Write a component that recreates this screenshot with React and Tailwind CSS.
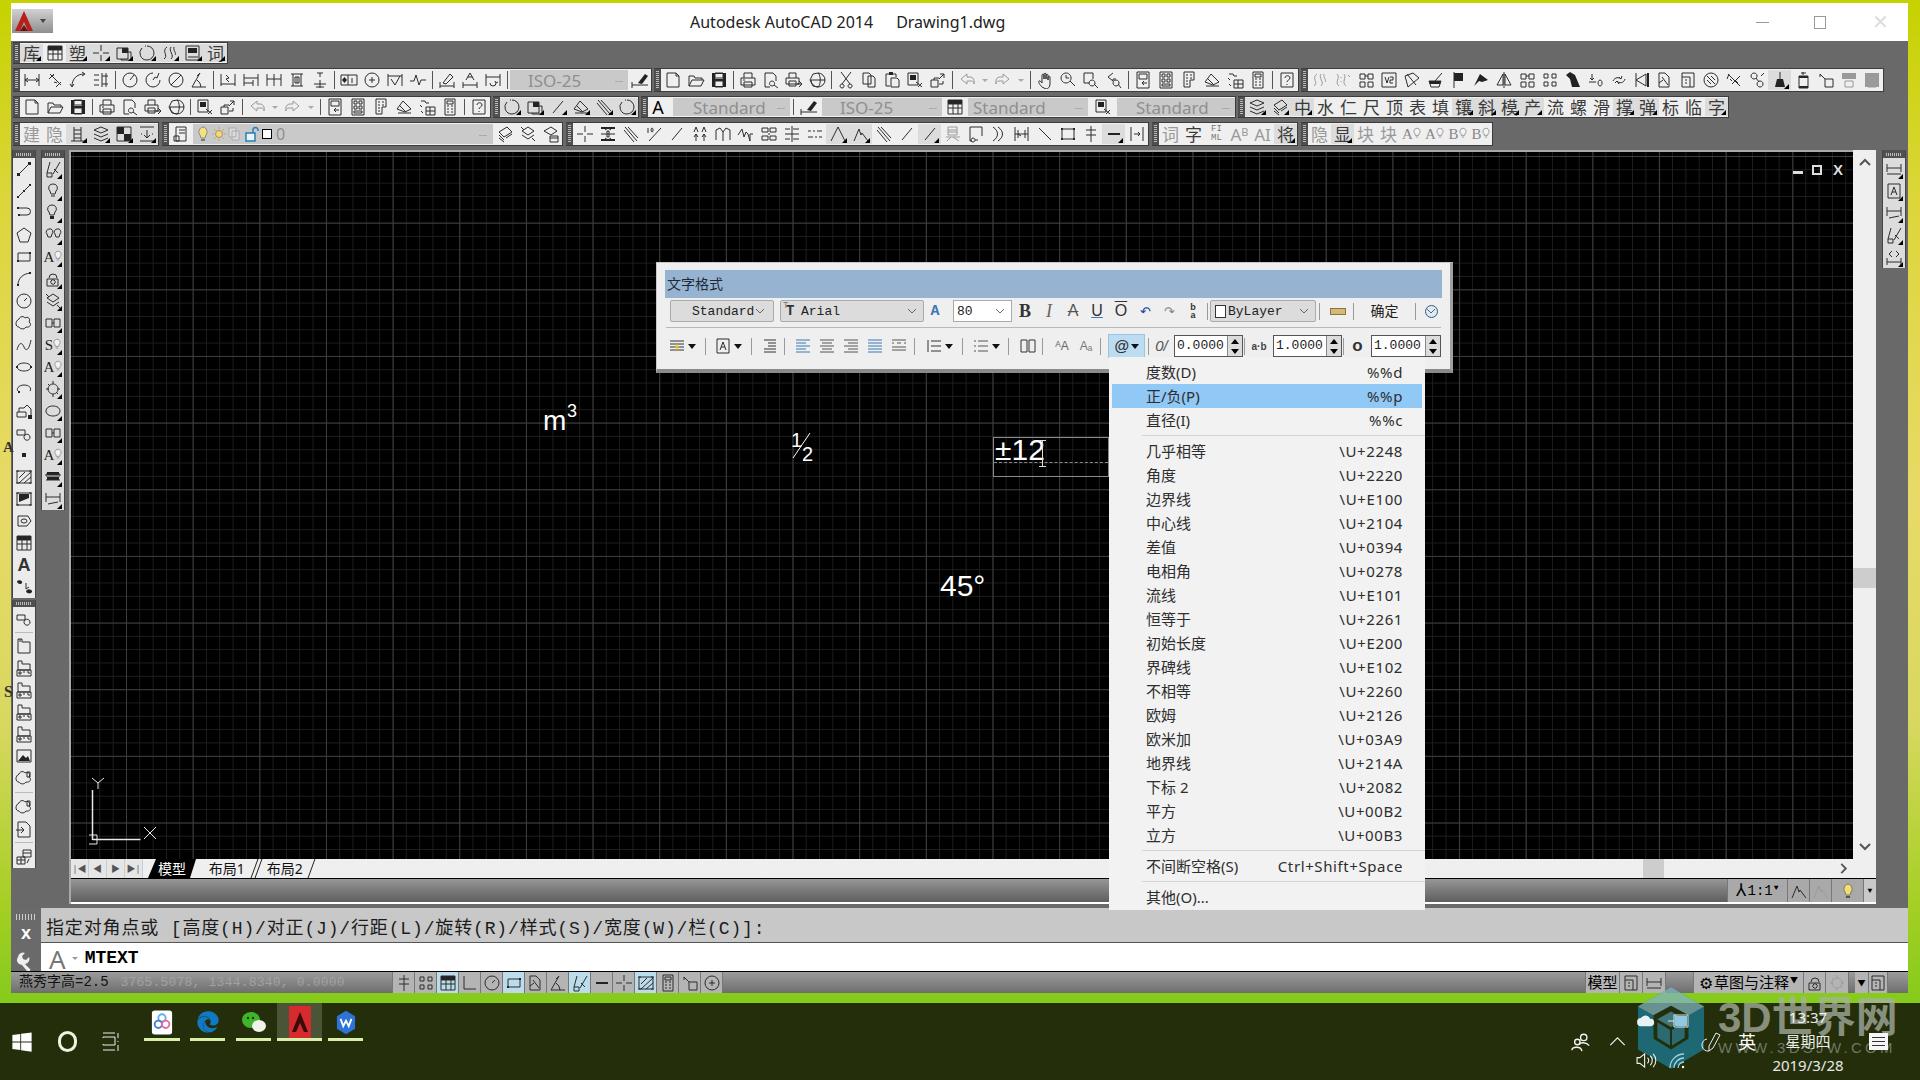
import { FaWindows, FaEdge } from "react-icons/fa"

const CJK = "font-['Noto_Sans','Noto_Sans_CJK_SC',sans-serif]"
const MONO = "font-['Liberation_Mono','Noto_Sans_CJK_SC',monospace]"
const ARIAL = "font-['Liberation_Sans',sans-serif]"

// stroke path, or [stroke path, fill path]
const P = {
  dimLinear: "M2 3v12M16 3v12M2 9h14M2 9l3-2M2 9l3 2M16 9l-3-2M16 9l-3 2",
  dimAligned: "M4 3l11 11M3 8l5-5M10 16l5-5M8 4l-3 1M8 11l3 1",
  dimArc: "M3 15C3 8 8 3 15 3M13 1l3 2-3 2M1 13l2 3 2-3",
  ordinate: "M2 4h5M2 9h5M2 14h5M10 2v14M14 2v14M10 5h6M10 13h6",
  radius: "M16 9a7 7 0 1 1-14 0a7 7 0 1 1 14 0M9 9l4-5",
  jog: "M16 9a7 7 0 1 1-7-7M9 9l2-3 2 1 2-5",
  diameter: "M16 9a7 7 0 1 1-14 0a7 7 0 1 1 14 0M4 14L14 4",
  angular: "M2 16h14M2 16L10 2M11 16a9 9 0 0 0-4-7M7 5l3-3",
  quick: "M2 3v12M16 3v12M2 13h14M7 4l3 3-3 1 3 3",
  baseline: "M2 3v12M16 3v12M2 7h14M2 12h9M11 9v6",
  cont: "M2 3v12M9 3v12M16 3v12M2 8h14",
  space: "M3 3h12M3 15h12M5 3v12M13 3v12M7 6h4v6H7zM9 6v6",
  brk: "M3 13h12M9 2v4M9 9v8M6 2h6M5 16h8",
  tol: ["M1 4h16v10H1zM8 4v10M12 7v5", "M4.5 6l2.5 3-2.5 3-2.5-3z"],
  center: "M16 9a7 7 0 1 1-14 0a7 7 0 1 1 14 0M9 6v6M6 9h6",
  inspect: "M2 3v12M16 3v12M2 5h14M5 8l4 6 5-9",
  jogl: "M1 10h4l2-6 3 10 2-5h5",
  dimEdit: "M2 15h14M2 11v6M16 11v6M5 12l7-9 3 3-7 7z",
  textEdit: "M5 9l4-7 4 7M6.5 6h5M2 11v6M16 11v6M2 14h14",
  update: "M2 3v12M16 3v12M2 6h14M6 12a3 3 0 0 0 6 0M11 10l1 2 2-1",
  brush: ["M1 11v6M1 14h16", "M7 12l7-9 3 2-6 8z"],
  newf: "M3 2h9l3 3v11H3zM12 2v3h3",
  open: "M2 15V5h5l1 2h7v2M2 15l3-6h12l-3 6z",
  save: ["M5 10h8v6H5zM5 2h8v5H5z", "M2 2h14v14H2zM5 3v5h8V3zM5 10v5h8v-5z"],
  print: "M5 7V2h8v5M2 7h14v7H2zM5 11h8v5H5zM4 9h2",
  preview: "M3 2h8l3 3v5M3 2v14h5M10 10a2.5 2.5 0 1 0 .1 0M12 14l4 3",
  publish: "M4 7V2h7v5M1 7h13v6H1zM4 10h7v5H4zM12 13h5M14 10l3 3-3 3",
  globe: "M10 2a7 7 0 1 1-7 7M10 2c3 2 3 12 0 14M3 9h14M5 3L2 9l3 6M10 2L5 3M10 16l-5-1",
  cut: "M4 1l9 12M14 1L5 13M5 13a2 2 0 1 0 .1 0M13 13a2 2 0 1 0 .1 0",
  copy: "M3 2h6l2 2v9H3zM8 5h5l2 2v9H8z",
  paste: ["M3 3v12h4M13 3v3M3 3h10M8 7h6l2 2v7H8z", "M6 1h4v3H6z"],
  match: ["M2 2h10v12H2zM10 11l6 5M12 16l4-4", "M4 4h6v5H4z"],
  block: "M2 9h7v7H2zM5 9V7h5M11 3h4v4M15 3l-5 5M10 13h4v-3",
  undo: "M9 3L3 8l6 5v-3h4c2 0 3 1 3 3 1-4-1-7-4-7H9z",
  redo: "M9 3l6 5-6 5v-3H5c-2 0-3 1-3 3-1-4 1-7 4-7h3z",
  pan: "M6 16c-2-2-4-5-3-6s2 1 3 2V4c0-1 2-1 2 0v4-5c0-1 2-1 2 0v5-4c0-1 2-1 2 0v5-3c0-1 2-1 2 0v7c0 3-2 5-4 5z",
  zoomR: "M7 2a5 5 0 1 0 .1 0M11 10l5 5M7 4v3h3",
  zoomW: ["M2 2h9v6M2 2v10h5M10 9a3 3 0 1 0 .1 0M12 13l4 4"],
  zoomP: "M8 2L3 6l5 4V8h3M11 9a3 3 0 1 0 .1 0M13 13l3 4",
  props: "M3 1h12v16H3zM5 3h8v5H5zM8 12h5M8 12l2-2M8 12l2 2",
  dc: "M3 1h12v16H3zM5 3h3v3H5zM10 3h3v3h-3zM5 8h3v3H5zM10 8h3v3h-3zM5 13h8v2H5z",
  tp: "M4 1h10v8h-4v7H4zM6 4h2M6 7h2M6 10h2M6 13h2M10 4h2M10 7h2",
  sheet: "M2 11l6-8 8 8-6 3zM3 15h13M5 8l6 6",
  markup: "M3 3h4l1 2h3M2 7l2 2M8 9h9v8H8zM8 13h9M12 9v8M3 13l2 2",
  calc: "M4 1h10v16H4zM6 3h6v3H6zM6 8h2M10 8h2M6 11h2M10 11h2M6 14h2M10 14h2",
  help: "M3 2h12v14H3zM7 7c0-3 5-3 5 0 0 2-3 2-3 4M9 13v1",
  tbl: ["M2 2h14v14H2zM2 6h14M2 10h14M7 2v14M12 2v14", "M2 2h14v4H2z"],
  cross: "M9 1v6M9 11v6M1 9h6M11 9h6",
  box3: ["M2 4h11v11H2zM13 8h3v8H6v-1", "M7 4h6v5H7z"],
  dashCirc: "M9 2a7 7 0 0 1 0 14M9 16a7 7 0 0 1-5-12M7 2l1 0",
  arcs: "M3 15c5-3-3-8 3-12M10 3c-3 4 4 8 0 12M13 3c-1 4 3 6 1 8",
  calcBox: ["M2 2h13v14H2zM4 13h10", "M4 4h9v5H4z"],
  fence2: "M3 3c4 4-3 8 2 12M10 3c3 4-3 8 2 12M7 6v1M7 10v1M14 4l2 2",
  boxes: "M3 3h5v5H3zM11 3h5v5h-5zM3 11h5v5H3zM11 11h5v5h-5zM8 5l3 0",
  boxes2: "M3 3h4v4H3zM11 3h4v4h-4zM3 11h4v4H3zM11 11h4v4h-4z",
  v2: "M2 2h14v14H2zM5 6l2 6 2-6M10 6h3v3h-3v3h3",
  kite: "M5 16L2 5l8-3 6 5-11 9M4 3l9 11",
  mortar: ["M3 10h12l-2 6H5zM9 10l7-8", "M3 10h12l-1 3H4z"],
  flag: ["M5 1v16", "M5 2h9v8H5z"],
  peak: ["", "M2 15L8 3l8 6-6 2-3-1z"],
  tri: "M2 14L8 3v11zM10 3l6 11h-6zM9 1v16",
  cat: ["", "M2 4l4-3 5 3 5 12H8L6 8z"],
  zero: "M2 11h7M5 3v6M3 7l2 2 2-2M13 9a2 3 0 1 0 .1 0",
  rot: "M3 10c2-4 6-4 8-2M9 6l2 2 1-3M15 8c-1 4-6 5-8 2M9 13l-2-3-2 2",
  dimEnd: ["M3 2v14M3 9l10-6v12z", "M14 2h2v14h-2z"],
  doc3: "M3 2h6l4 4v10H3zM6 6l6 8M3 12l4-3",
  doc4: "M3 2h12v14H3zM3 6h8v10M6 9h2M6 12h2",
  ball: "M16 9a7 7 0 1 1-14 0a7 7 0 1 1 14 0M5 5l8 8M9 5l4 4M5 9l4 4",
  xarrows: "M3 3l12 12M15 5l-8 8M5 8l2 2M11 10l2 2M2 8l2-5",
  link: "M6 2a3 3 0 1 0 .1 0M12 10a3 3 0 1 0 .1 0M8 7l3 4M13 5l3-3",
  broom: ["M9 1v7", "M6 8h6l2 8H4z"],
  bigbox: ["M5 5h9v12H5zM7 2h5M9 1v3", "M5 5h9v2H5zM5 15h9v2H5z"],
  smallbox: "M3 3l5 5M8 8h8v8H8zM3 3v3",
  disk: ["M5 10h8v6H5z", "M2 2h14v6H2z"],
  disk2: ["M5 10h8v6H5zM5 3h8v4H5z", "M2 2h14v14H2z"],
  ladder: "M5 2v14M12 2v14M5 5h7M5 9h7M5 13h7M2 16h14",
  layers: "M2 5l7-3 7 3-7 3zM2 9l7 3 7-3M2 13l7 3 7-3",
  colors: ["M2 2h14v14H2z", "M2 2h7v7H2zM9 9h7v7H9z"],
  dotted: "M2 2h14M2 16h14M9 5v8M6 10l3 3 3-3M3 9h1M14 9h1",
  layer0: "M4 2h10v14H4zM7 5h6M7 8h6M2 11h5v5H2z",
  lay1: "M3 7l8-5 5 5-8 5zM3 10l5 5M10 13l6-4M3 13l5 4",
  lay2: "M3 6l6-4 6 4-6 4zM3 10l6 4 6-4M2 2l3 3M13 13l3 3",
  lay3: "M2 6l7-4 6 4M2 6l7 4 6-4M8 11h8v6H8zM8 13h8",
  dimBrk: ["M2 9h14M8 6h2v6H8zM6 5l3-2 3 2M6 13l3 2 3-2", "M2 2h14v2H2zM2 14h14v2H2z"],
  slashes: "M3 2l12 14M6 2l10 11M2 5l10 12",
  t10: "M3 3v5M7 3a1 2 0 1 0 .1 0M4 16L16 3",
  slash1: "M4 15L14 3",
  aa: "M3 7l2-5 2 5M11 7l2-5 2 5M5 9v7M13 9v7M3 12l2-3 2 3M11 12l2-3 2 3",
  emm: "M2 15V5l4-2 3 4 3-4 4 2v10M9 7v9",
  wave: "M1 10l4-6 2 8 2-5 2 2 2 7V9h3",
  hook: "M2 3h6v4H2zM10 3h6v4h-6zM2 15h6v-4H2zM10 15h6v-4h-6zM8 9h2",
  tick: "M2 4h5M2 9h14M10 4h6M2 14h5M10 14h6M9 1v16",
  dash2: "M2 6h3M7 6h2M11 6h5M2 12h5M9 12h2M13 12h3",
  peakLine: "M2 16L9 2l7 14",
  peak2: "M2 16l5-12 2 6 1-2 6 8",
  kana: "M4 2h9v8H4zM4 5h9M4 7h9M2 12h14M7 12l-4 4M9 12l6 4",
  hookBox: "M3 2h12v9M3 2v14h2M6 13a2 2 0 1 0 .1 0M8 15h3",
  parens: "M3 2c6 4 6 10 0 14M8 2c6 4 6 10 0 14",
  dimBig: "M2 2v14M15 2v14M5 5v8M12 5v8M2 9h13M5 9l3 2",
  diag: "M3 3l12 12",
  square: ["M3 4h12v10H3z", "M2 3h2v2H2zM14 13h2v2h-2zM14 3h2v2h-2zM2 13h2v2H2z"],
  hatch3: "M9 1v16M4 5h10M4 10h10",
  minusArrows: ["", "M3 8h12v2H3z"],
  idot: ["M9 1v16M6 1h6M6 17h6", "M8 5h2v8H8z"],
  dimBar: "M3 2v14M15 2v14M6 9h6M12 9l-2-2M12 9l-2 2",
  line: ["M4 14L14 4", "M2 13h3v3H2zM13 2h3v3h-3z"],
  xline: ["M3 15L15 3", "M2 14h2v2H2zM8 8h2v2H8zM14 2h2v2h-2z"],
  pline: ["M4 4h8a3 3 0 0 1 0 7H5", "M2 3h2v2H2zM3 10h2v2H3z"],
  polygon: "M9 2l7 5-3 9H5L2 7z",
  rect: ["M3 5h12v8H3z", "M2 12h2v2H2zM14 4h2v2h-2z"],
  arc: ["M3 15c0-7 5-11 12-12", "M2 14h2v2H2zM14 2h2v2h-2z"],
  circle: "M16 9a7 7 0 1 1-14 0a7 7 0 1 1 14 0M9 9l3-3",
  cloud: "M4 5c1-3 5-3 6-1 3-2 6 1 4 4 3 2 1 6-3 5-2 3-6 2-7 0-4 0-4-6 0-8z",
  spline: "M2 14c2-8 5-8 7-3s5 3 7-7",
  ellipse: ["M16 9c0 2-3 4-7 4s-7-2-7-4 3-4 7-4 7 2 7 4z", "M1 8h2v2H1zM15 8h2v2h-2z"],
  earc: ["M4 12c-4-3 0-7 5-7s8 3 6 6", "M3 11h2v2H3z"],
  insert: ["M2 10h9v5H2zM4 10V6h5l3-3 4 4v6", "M13 13h4v4h-4z"],
  makeBlock: "M2 6h8v5H2zM10 11a3 3 0 1 0 5 2 3 3 0 0 0-5-2z",
  point: ["", "M7 7h4v4H7z"],
  hatch: "M2 3h14v12H2zM1 3h3M14 3h3M1 15h3M14 15h3M4 15L16 4M4 10l6-6M9 15l7-6",
  grad: ["M2 3h14v12H2zM1 3h3M14 3h3M1 15h3M14 15h3", "M4 4h10v4L4 12z"],
  region: "M3 4h10l3 5-4 5H3zM6 9a3 2 0 1 0 6 0 3 2 0 1 0-6 0",
  addsel: ["M11 5v6l3-2", "M2 3c3-2 6 0 5 2s-5 1-5-2zM12 12a3 2 0 1 0 5 2 3 2 0 0 0-5-2z"],
  fold: "M3 2h4v3h8v11H3zM5 5l0-3",
  dwg: "M3 2h4v3h8v6H3zM2 11h14v6H2zM4 13h2v2H4zM8 13h2M12 13h2v2",
  photo: ["M2 3h14v12H2z", "M3 14l5-6 3 3 2-2 2 5z"],
  cloud2: "M4 5c1-3 5-3 6-1 3-2 6 1 4 4 3 2 1 6-3 5-2 3-6 2-7 0-4 0-4-6 0-8zM12 3h3v5h-3z",
  tablelink: "M8 2h8v7h-8zM8 5h8M2 9h8v7H2zM2 12h8M6 9v7M14 11l-2 4",
  arrowDoc: "M3 2h8l4 4v11H3zM1 10h8M6 7l3 3-3 3",
  bulbA: "M9 2a4 4 0 0 0-3 7l1 3h4l1-3a4 4 0 0 0-3-7zM7 14h4",
  bulbB: ["M8 1a4 4 0 0 0-3 7l1 3h4l1-3a4 4 0 0 0-3-7z", "M6 12h4v3H6z"],
  twoBulbs: "M5 3a3 3 0 0 0-2 5l1 3h3l1-3a3 3 0 0 0-3-5zM13 3a3 3 0 0 0-2 5l1 3h3l1-3a3 3 0 0 0-3-5z",
  chain: "M5 8a4 4 0 0 1 8 0M3 9h11v7H3zM7 11a2 2 0 1 0 4 2 2 2 0 0 0-4-2z",
  flower: "M9 4a5 5 0 1 0 .1 0M2 9h3M13 9h3M9 1v3M9 14v3M4 4l2 2M14 14l-2-2",
  bigOval: ["M16 9c0 3-3 5-7 5s-7-2-7-5 3-5 7-5 7 2 7 5z"],
  dumbbell: "M2 5h6v8H2zM10 5h6v8h-6zM8 9h2",
  sandwich: ["M2 6h14v2H2zM2 12h14", "M3 4h12v3H3zM3 9h12v3H3z"],
  stackTop: "M2 4v8M16 4v8M2 8h14M2 14h14",
  aBox: "M3 2h12v14H3zM6 13l3-8 3 8M7 10h4",
  dimSmall: "M2 3v9M16 3v9M2 7h14M4 14l10-2",
  ladderNode: "M3 13l3-11M9 14L16 2M3 13h5v4H3zM10 9l4 4",
  code: "M7 3L4 6l3 3M11 3l3 3-3 3M2 10v7M16 10v7M2 14h14",
  ortho: "M3 2v13h12",
  ruler: ["M1 6h16v6H1z", "M3 6h1v3H3zM6 6h1v3H6zM9 6h1v3H9zM12 6h1v3h-1zM15 6h1v3h-1z"],
}

const Ico = ({ name, dim, className }) => {
  const v = P[name] || ""
  const [s, f] = Array.isArray(v) ? v : [v]
  return (
    <svg viewBox="0 0 18 18" fill="none" className={`w-[18px] h-[18px] shrink-0 ${dim ? "stroke-[#9a9a9a]" : "stroke-[#2c2c2c]"} ${className || ""}`} strokeWidth="1">
      {f && <path d={f} className={dim ? "fill-[#9a9a9a]" : "fill-[#222]"} stroke="none" />}
      {s && <path d={s} />}
    </svg>
  )
}

// little black corner on buttons with a flyout
const Fly = () => <span className="absolute right-[2px] bottom-[1px] w-0 h-0 border-l-[5px] border-l-transparent border-b-[5px] border-b-black" />

const Sep = () => (
  <div className="w-[6px] flex justify-center shrink-0 py-[2px]"><div className="w-px bg-[#555]" /></div>
)

const Drop = () => (
  <div className="w-[13px] flex items-center justify-center shrink-0">
    <span className="w-0 h-0 border-x-[3px] border-x-transparent border-t-[3px] border-t-[#aaa]" />
  </div>
)

// a letter with a small light bulb beside it
const LetterBulb = ({ letter, dim }) => (
  <span className="flex items-center">
    <span className={`font-['Liberation_Serif',serif] text-[15px] leading-none ${dim ? "text-[#888]" : "text-[#222]"}`}>{letter}</span>
    <svg viewBox="0 0 10 14" className="w-[8px] h-[12px] mb-[3px]" fill="#f4f4f4" stroke="#888"><path d="M5 1a4 4 0 0 0-2.5 7l.5 2h4l.5-2A4 4 0 0 0 5 1zM3.5 12h3" /></svg>
  </span>
)

// "|" separator, "v" small arrow, "#x" text glyph, "@x" letter + bulb, "~" at the end grey + flyout, "!" at the end disabled
const Cell = ({ item }) => {
  if (item === "|") return <Sep />
  if (item === "v") return <Drop />
  const fly = item.endsWith("~")
  const dim = item.endsWith("!")
  const raw = fly || dim ? item.slice(0, -1) : item
  const glyph = raw.startsWith("#")
  let inner = <Ico name={raw} dim={dim} />
  if (raw === "#FIML") {
    inner = <span className={`${MONO} text-[9px] leading-[9px] text-center text-[#777]`}>FI<br />ML</span>
  } else if (glyph) {
    inner = <span className={`${CJK} text-[17px] leading-none ${dim ? "text-[#999]" : "text-[#3a3a3a]"}`}>{raw.slice(1)}</span>
  } else if (raw.startsWith("@")) {
    inner = <LetterBulb letter={raw.slice(1)} dim={dim} />
  }
  return (
    <div className={`relative w-[23px] shrink-0 flex items-center justify-center ${fly ? "my-[1px] mx-0 bg-[#dcdcdc]" : ""}`}>
      {inner}
      {fly && <Fly />}
    </div>
  )
}

const Grip = () => (
  <div className="w-[7px] shrink-0 bg-[#4f4f4f] flex justify-center py-[2px]">
    <div className="w-[3px] h-full bg-[repeating-linear-gradient(#bbb_0_1px,#4f4f4f_1px_2px)]" />
  </div>
)

const Bar = ({ items, children }) => (
  <div className="flex items-stretch bg-[#efefef] border-y border-r border-[#3c3c3c]">
    <Grip />
    {items && items.map((it, i) => <Cell key={i} item={it} />)}
    {children}
  </div>
)

const Combo = ({ className, label, labelClass }) => (
  <div className={`flex items-center bg-[#c9c9c9] my-[1px] shrink-0 ${className}`}>
    <span className={`flex-1 text-[#8f8f8f] text-[17px] leading-none ${CJK} ${labelClass}`}>{label}</span>
    <span className="w-[8px] h-[4px] mr-[5px] border-b border-[#aaa]" />
  </div>
)

const bar0 = ["#库~", "tbl", "#塑~", "cross~", "box3~", "dashCirc~", "arcs~", "calcBox~", "#词~"]
const row1a = ["dimLinear", "dimAligned", "dimArc", "ordinate", "|", "radius", "jog", "diameter", "angular", "|", "quick", "baseline", "cont", "space", "brk", "|", "tol", "center", "inspect", "jogl", "|", "dimEdit", "textEdit", "update", "|"]
const stdTools = ["newf", "open", "save", "|", "print", "preview", "publish", "globe", "|"]
const row1b = [...stdTools, "cut", "copy", "paste", "match", "block", "|", "undo!", "v", "redo!", "v", "|", "pan", "zoomR", "zoomW", "zoomP", "|", "props", "dc", "tp", "sheet", "markup", "calc", "|", "help"]
const row1c = ["arcs!", "fence2!", "boxes", "v2", "kite", "mortar", "flag", "peak", "tri", "boxes", "boxes2", "cat", "zero", "rot", "dimEnd", "doc3", "doc4", "ball", "xarrows", "link", "broom~", "bigbox", "smallbox", "disk!", "disk2!"]
const row2a = [...stdTools, "match", "block", "|", "undo!", "v", "redo!", "v", "|", "props", "dc", "tp", "sheet", "markup", "calc", "|", "help"]
const row2b = ["dashCirc~", "box3~", "slash1~", "sheet~", "slashes~", "dashCirc~"]
const row2e = ["layers~", "lay1~", "#中~", "#水", "#仁", "#尺", "#顶", "#表", "#填", "#镶~", "#斜~", "#模~", "#产~", "#流", "#螺", "#滑", "#撑~", "#弹~", "#标", "#临", "#字~"]
const row3a = ["#建!", "#隐!", "ladder~", "layers~", "colors~", "dotted~"]
const row3c = ["cross", "dimBrk", "slashes", "t10", "slash1", "aa", "emm", "wave", "hook", "tick", "dash2", "peakLine~", "peak2~", "slashes", "slash1", "slash1~", "kana!", "hookBox", "parens", "dimBig", "diag", "square", "hatch3", "minusArrows~", "idot~"]
const row3c2 = [...row3c.slice(0, 24), "dimBar"]
const row3d = ["#词!", "#字", "#FIML", "#Aᴮ!", "#AI!", "#将~"]
const row3e = ["#隐!", "#显~", "#块!", "#块!", "@A!", "@A!", "@B!", "@B!"]

const TitleBar = () => (
  <div className="relative h-[38px] bg-white shrink-0 flex items-center">
    <div className="ml-[1px] mt-[-2px] w-[41px] h-[24px] bg-gradient-to-b from-[#d2d2d2] to-[#8f8f8f] flex items-center">
      <svg viewBox="0 0 20 22" className="w-[20px] h-[22px] ml-[2px]">
        <path d="M10 1L1 21h5l4-9 4 9h5z" fill="#b81f1b" />
        <path d="M6 21l4-6 4 6z" fill="#6f0f0c" />
      </svg>
      <span className="ml-[6px] w-0 h-0 border-x-[3px] border-x-transparent border-t-[4px] border-t-[#444]" />
    </div>
    <div className={`ml-[637px] mt-[-1px] flex gap-[23px] text-[#222] text-[16px] ${CJK}`}>
      <span>Autodesk AutoCAD 2014</span>
      <span>Drawing1.dwg</span>
    </div>
    <div className="ml-auto flex items-center mr-[19px]">
      <span className="w-[13px] h-px bg-[#999]" />
      <span className="ml-[45px] w-[12px] h-[13px] border border-[#999]" />
      <span className="ml-[46px] text-[#ddd] text-[20px] leading-none font-light">✕</span>
    </div>
  </div>
)

const Toolbars = () => (
  <div className="h-[109px] shrink-0 bg-[#696969] flex flex-col gap-[4px] pt-[1px] pl-[2px]">
    <div className="flex h-[22px]"><Bar items={bar0} /></div>
    <div className="flex h-[24px] gap-[2px]">
      <Bar items={row1a}>
        <Combo className="ml-[0px] w-[118px]" label="ISO-25" labelClass="pl-[18px]" />
        <Cell item="brush" />
      </Bar>
      <Bar items={row1b} />
      <Bar items={row1c} />
    </div>
    <div className="flex h-[22px] gap-[2px]">
      <Bar items={row2a} />
      <Bar items={row2b} />
      <Bar>
        <div className={`w-[20px] flex items-center justify-center text-[18px] ${CJK}`}>A</div>
        <Combo className="ml-[5px] w-[117px]" label="Standard" labelClass="pl-[20px]" />
        <Sep />
        <div className="w-[26px] flex items-center justify-center"><Ico name="brush" /></div>
        <Combo className="w-[120px]" label="ISO-25" labelClass="pl-[18px]" />
        <div className="w-[26px] flex items-center justify-center"><Ico name="tbl" /></div>
        <Combo className="w-[120px]" label="Standard" labelClass="pl-[5px]" />
        <div className="w-[29px] flex items-center justify-center"><Ico name="match" /></div>
        <Combo className="w-[118px]" label="Standard" labelClass="pl-[19px]" />
      </Bar>
      <Bar items={row2e} />
    </div>
    <div className="flex h-[24px] gap-[3px]">
      <Bar items={row3a} />
      <Bar>
        <div className="w-[24px] flex items-center justify-center"><Ico name="layer0" /></div>
        <div className="w-[300px] bg-[#c9c9c9] my-[1px] flex items-center pl-[4px]">
          <svg viewBox="0 0 12 16" className="w-[12px] h-[16px]"><path d="M6 1a5 5 0 0 0-3 8l1 3h4l1-3a5 5 0 0 0-3-8z" fill="#f6e27a" stroke="#888" /><path d="M4 13h4v2H4z" fill="#777" /></svg>
          <svg viewBox="0 0 14 14" className="w-[14px] h-[14px] ml-[3px]"><circle cx="7" cy="7" r="3.5" fill="#f2dc6a" stroke="#a88" /><path d="M7 0v2M7 12v2M0 7h2M12 7h2M2 2l1.5 1.5M10.5 10.5L12 12M12 2l-1.5 1.5M3.5 10.5L2 12" stroke="#c9a93a" /></svg>
          <svg viewBox="0 0 12 14" className="w-[12px] h-[14px] ml-[2px]"><path d="M1 1h7v9H1zM4 4h7v9H4z" fill="#dcdcdc" stroke="#aaa" /></svg>
          <svg viewBox="0 0 14 16" className="w-[14px] h-[16px] ml-[5px]"><path d="M8 7V4a2.5 2.5 0 0 1 5 0v1" fill="none" stroke="#2a7fb0" strokeWidth="1.5" /><path d="M1 7h9v8H1z" fill="#e8f4fa" stroke="#2a7fb0" strokeWidth="1.5" /></svg>
          <span className="ml-[3px] w-[10px] h-[10px] bg-white border border-black" />
          <span className={`ml-[4px] text-[#8f8f8f] text-[16px] leading-none ${CJK}`}>0</span>
          <span className="ml-auto w-[8px] h-[4px] mr-[6px] border-b border-[#aaa]" />
        </div>
        <Cell item="lay1" />
        <Cell item="lay2" />
        <Cell item="lay3" />
      </Bar>
      <Bar items={row3c2} />
      <Bar items={row3d} />
      <Bar items={row3e} />
    </div>
  </div>
)

const VHead = () => (
  <div className="h-[8px] bg-[#505050] flex items-center justify-center">
    <div className="w-[16px] h-[3px] bg-[repeating-linear-gradient(90deg,#bbb_0_1px,#505050_1px_2px)]" />
  </div>
)

const VBar = ({ items, className }) => (
  <div className={`w-[24px] bg-[#ebebeb] border-x border-[#444] flex flex-col shrink-0 ${className || ""}`}>
    <VHead />
    {items.map((it, i) =>
      it === "-" ? (
        <div key={i} className="h-[7px] flex items-center px-[2px]"><div className="h-px w-full bg-[#bbb]" /></div>
      ) : (
        <VCell key={i} item={it} />
      ),
    )}
  </div>
)

const VCell = ({ item }) => {
  const fly = item.endsWith("~")
  const raw = fly ? item.slice(0, -1) : item
  let inner = <Ico name={raw} />
  if (raw.startsWith("#")) inner = <span className={`${ARIAL} text-[18px] font-bold leading-none text-[#333]`}>{raw.slice(1)}</span>
  if (raw.startsWith("@")) inner = <LetterBulb letter={raw.slice(1)} />
  return (
    <div className={`relative h-[22px] flex items-center justify-center shrink-0 ${fly ? "bg-[#dcdcdc]" : ""}`}>
      {inner}
      {fly && <Fly />}
    </div>
  )
}

const LeftDock = () => (
  <div className="w-[58px] shrink-0 bg-[#696969] flex gap-[5px] pl-[1px]">
    <div className="flex flex-col gap-[2px]">
      <VBar items={["line", "xline", "pline", "polygon", "rect", "arc", "circle", "cloud", "spline", "ellipse", "earc", "insert", "makeBlock", "point", "hatch", "grad", "region", "tbl", "#A", "addsel"]} />
      <VBar items={["makeBlock", "-", "fold", "dwg", "dwg", "dwg", "dwg", "photo", "cloud2", "-", "cloud2", "arrowDoc", "-", "tablelink"]} className="h-[268px]" />
    </div>
    <VBar className="h-[360px]" items={["ladderNode~", "bulbA~", "bulbB~", "twoBulbs~", "@A~", "chain~", "lay2~", "dumbbell~", "@S~", "@A~", "flower~", "bigOval~", "dumbbell~", "@A~", "sandwich~", "dimSmall~"]} />
  </div>
)

const RightDock = () => (
  <div className="w-[32px] shrink-0 bg-[#696969] pl-[6px]">
    <VBar items={["stackTop~", "aBox~", "dimSmall~", "ladderNode~", "code~"]} />
  </div>
)

const Canvas = () => (
  <div className="flex-1 flex min-h-0">
    <div className="relative flex-1 border-t-2 border-[#a8a8a8] bg-black bg-[linear-gradient(#3c3c3c_1px,transparent_1px),linear-gradient(90deg,#3c3c3c_1px,transparent_1px),linear-gradient(#1e1e1e_1px,transparent_1px),linear-gradient(90deg,#1e1e1e_1px,transparent_1px)] bg-[size:66.67px_66.67px,66.67px_66.67px,13.33px_13.33px,13.33px_13.33px] bg-[position:0_4px,55px_0,0_4px,1.67px_0]">
      <div className="absolute left-[1722px] top-[10px] flex items-center gap-[9px] text-white">
        <span className="w-[10px] h-[3px] bg-[#ddd] mt-[6px]" />
        <span className="w-[10px] h-[10px] border-2 border-[#ddd]" />
        <span className={`${ARIAL} font-bold text-[15px] leading-none ml-[2px] text-[#ddd]`}>X</span>
      </div>
      <svg viewBox="0 0 80 74" className="absolute left-[18px] top-[625px] w-[80px] h-[74px]" fill="none" stroke="#e8e8e8">
        <path d="M3.5 13v50M3.5 62.5h48" strokeWidth="1.5" />
        <path d="M-1 58h9v9h-9z" />
        <path d="M3 1l6 5 6-5M9 6v6M55 50l12 12M67 50L55 62" />
      </svg>
    </div>
    <div className="w-[23px] shrink-0 bg-[#efefef] flex flex-col items-center">
      <svg viewBox="0 0 12 8" className="w-[12px] h-[8px] mt-[8px]" fill="none" stroke="#555" strokeWidth="2"><path d="M1 7l5-5 5 5" /></svg>
      <div className="mt-[402px] w-full h-[20px] bg-[#cdcdcd]" />
      <svg viewBox="0 0 12 8" className="w-[12px] h-[8px] mt-auto mb-[8px]" fill="none" stroke="#555" strokeWidth="2"><path d="M1 1l5 5 5-5" /></svg>
    </div>
  </div>
)

const Tabs = () => (
  <div className={`h-[19px] shrink-0 bg-[#efefef] flex items-stretch text-[14px] ${CJK}`}>
    <div className="flex w-[72px] text-[#555]">
      {["|◀", "◀", "▶", "▶|"].map((t) => (
        <span key={t} className="w-[18px] border-r border-[#ccc] bg-[#e6e6e6] flex items-center justify-center text-[9px] leading-none">{t}</span>
      ))}
    </div>
    <div className="ml-[5px] w-[48px] bg-black text-white flex items-center justify-center leading-none [clip-path:polygon(8px_0,100%_0,calc(100%-6px)_100%,0_100%)]">模型</div>
    <div className="ml-[5px] w-[54px] flex items-center justify-center leading-none text-[#111] border-r border-[#222] -skew-x-[20deg]"><span className="skew-x-[20deg]">布局1</span></div>
    <div className="ml-[3px] w-[54px] flex items-center justify-center leading-none text-[#111] border-x border-[#222] -skew-x-[20deg]"><span className="skew-x-[20deg]">布局2</span></div>
    <div className="ml-auto w-[21px] bg-[#cdcdcd]" />
    <div className="w-[212px] flex items-center justify-end pr-[28px]">
      <svg viewBox="0 0 8 12" className="w-[8px] h-[11px]" fill="none" stroke="#555" strokeWidth="2"><path d="M1 1l5 5-5 5" /></svg>
    </div>
  </div>
)

const AnnoStrip = () => (
  <div className="h-[24px] shrink-0 border-t border-black bg-gradient-to-b from-[#979797] to-[#5e5e5e] flex justify-end">
    <div className={`flex items-stretch text-[14px] ${MONO}`}>
      <div className="w-[60px] bg-[#a9a9a9] border-l border-[#777] flex items-center justify-center gap-[1px] text-black leading-none">
        <span className="text-[18px]">⅄</span>1:1<span className="text-[8px] mb-[6px]">▼</span>
      </div>
      <div className="w-[22px] border-l border-[#777] bg-[#a9a9a9] flex items-center justify-center"><Ico name="peak2" /></div>
      <div className="w-[22px] border-l border-[#777] bg-[#a9a9a9] flex items-center justify-center"><Ico name="peak2" dim /></div>
      <div className="w-[32px] border-l border-[#777] bg-[#a9a9a9] flex items-center justify-center">
        <svg viewBox="0 0 12 16" className="w-[12px] h-[16px]"><path d="M6 1a5 5 0 0 0-3 8l1 3h4l1-3a5 5 0 0 0-3-8z" fill="#f6dc6a" stroke="#777" /><path d="M4 13h4v2H4z" fill="#555" /></svg>
      </div>
      <div className="w-[13px] border-l border-[#777] bg-[#c9c9c9] flex items-center justify-center text-[8px]">▼</div>
    </div>
  </div>
)

const CommandLine = () => (
  <div className="h-[63px] shrink-0 flex">
    <div className="w-[30px] shrink-0 bg-[#6a6a6a] flex flex-col items-center text-white">
      <div className="w-[20px] h-[6px] mt-[6px] bg-[repeating-linear-gradient(90deg,#ccc_0_1px,#6a6a6a_1px_3px)]" />
      <span className={`${ARIAL} font-bold text-[18px] leading-none mt-[4px]`}>x</span>
      <svg viewBox="0 0 20 20" className="w-[20px] h-[20px] mt-[9px]" fill="#eee"><path d="M2 6a5 5 0 0 1 7-4L6 5l1 3 3 1 3-3a5 5 0 0 1-4 7l5 5c1 2-1 3-3 2l-5-6a5 5 0 0 1-4-8z" /></svg>
    </div>
    <div className="flex-1 flex flex-col min-w-0">
      <div className={`h-[35px] bg-[#c8c8c8] border-b border-[#555] flex items-center pl-[5px] pt-[8px] text-[#1c1c1c] text-[18px] tracking-[0.85px] whitespace-pre ${MONO}`}>
        指定对角点或 [高度(H)/对正(J)/行距(L)/旋转(R)/样式(S)/宽度(W)/栏(C)]:
      </div>
      <div className="flex-1 bg-white flex items-center pl-[8px] pt-[2px]">
        <span className={`${CJK} text-[#777] text-[26px] leading-none`}>A</span>
        <span className="ml-[6px] w-0 h-0 border-x-[3px] border-x-transparent border-t-[3px] border-t-[#999]" />
        <span className={`ml-[7px] font-bold text-black text-[18px] ${MONO}`}>MTEXT</span>
      </div>
    </div>
  </div>
)

const StBtn = ({ name, on }) => (
  <div className={`w-[22px] border-r border-[#777] flex items-center justify-center shrink-0 ${on ? "bg-[#bcdcec]" : "bg-[#b4b4b4]"}`}>
    <Ico name={name} className="w-[16px] h-[16px]" />
  </div>
)

const StatusBar = () => (
  <div className={`h-[22px] shrink-0 bg-gradient-to-b from-[#9c9c9c] to-[#6e6e6e] border-t border-black flex items-stretch ${MONO}`}>
    <div className="w-[381px] shrink-0 flex items-center pl-[8px] text-[14px] whitespace-pre">
      <span className="text-[#111]">燕秀字高=2.5</span>
      <span className="ml-[12px] text-[#a2a2a2] text-[13px] tracking-[0.2px]">3765.5078, 1344.8340, 0.0000</span>
    </div>
    <div className="flex border-l border-[#777]">
      <StBtn name="hatch3" />
      <StBtn name="boxes2" />
      <StBtn name="tbl" on />
      <StBtn name="ortho" />
      <StBtn name="circle" />
      <StBtn name="rect" on />
      <StBtn name="doc3" />
      <StBtn name="angular" />
      <StBtn name="ladderNode" on />
      <StBtn name="minusArrows" />
      <StBtn name="cross" />
      <StBtn name="hatch" on />
      <StBtn name="calc" />
      <StBtn name="smallbox" />
      <StBtn name="center" />
    </div>
    <div className={`ml-auto flex items-stretch text-[15px] leading-none text-black ${CJK}`}>
      <div className="w-[35px] bg-[#b4b4b4] border-x border-[#777] flex items-center justify-center">模型</div>
      <div className="w-[23px] bg-[#b4b4b4] border-r border-[#777] flex items-center justify-center"><Ico name="doc4" /></div>
      <div className="w-[23px] bg-[#b4b4b4] border-r border-[#777] flex items-center justify-center"><Ico name="stackTop" /></div>
      <div className="ml-[27px] w-[111px] bg-[#b4b4b4] border-x border-[#777] flex items-center justify-center gap-[1px]">
        <span className="text-[16px]">⚙</span>草图与注释<span className="text-[8px] mb-[6px]">▼</span>
      </div>
      <div className="w-[22px] bg-[#b4b4b4] border-r border-[#777] flex items-center justify-center"><Ico name="chain" /></div>
      <div className="w-[23px] bg-[#b4b4b4] border-r border-[#777] flex items-center justify-center"><Ico name="flower" dim /></div>
      <div className="ml-[6px] w-[13px] bg-[#b4b4b4] flex items-center justify-center text-[8px]">▼</div>
      <div className="w-[20px] bg-[#b4b4b4] border-x border-[#777] flex items-center justify-center"><Ico name="doc4" /></div>
      <div className="w-[20px]" />
    </div>
  </div>
)

const menuTop = [["度数(D)", "%%d"], ["正/负(P)", "%%p"], ["直径(I)", "%%c"]]
const menuMid = [
  ["几乎相等", "\\U+2248"], ["角度", "\\U+2220"], ["边界线", "\\U+E100"], ["中心线", "\\U+2104"], ["差值", "\\U+0394"], ["电相角", "\\U+0278"], ["流线", "\\U+E101"], ["恒等于", "\\U+2261"], ["初始长度", "\\U+E200"], ["界碑线", "\\U+E102"], ["不相等", "\\U+2260"], ["欧姆", "\\U+2126"], ["欧米加", "\\U+03A9"], ["地界线", "\\U+214A"], ["下标 2", "\\U+2082"], ["平方", "\\U+00B2"], ["立方", "\\U+00B3"],
]

const MenuRow = ({ label, hint, active }) => (
  <div className={`h-[24px] mx-[3px] pl-[34px] pr-[19px] flex items-center justify-between ${active ? "bg-[#90c8f6]" : ""}`}>
    <span>{label}</span>
    <span className="tracking-[0.6px]">{hint}</span>
  </div>
)

const MenuSep = () => (
  <div className="h-[7px] flex items-center pl-[33px]"><div className="h-px w-full bg-[#d4d4d4]" /></div>
)

const SymbolMenu = () => (
  <div className={`absolute left-[1109px] top-[357px] w-[316px] h-[553px] pt-[3px] bg-[#f2f2f2] text-[#2e2e2e] text-[15px] leading-none ${CJK}`}>
    {menuTop.map(([a, b]) => <MenuRow key={a} label={a} hint={b} active={a.startsWith("正")} />)}
    <MenuSep />
    {menuMid.map(([a, b]) => <MenuRow key={a} label={a} hint={b} />)}
    <MenuSep />
    <MenuRow label="不间断空格(S)" hint="Ctrl+Shift+Space" />
    <MenuSep />
    <MenuRow label="其他(O)..." hint="" />
  </div>
)

const Fx = ({ className, children }) => (
  <div className={`flex items-center justify-center shrink-0 ${className}`}>{children}</div>
)
const VSep = ({ className }) => <div className={`w-px h-[17px] bg-[#9a9a9a] shrink-0 ${className}`} />
const Tri = () => <span className="w-0 h-0 border-x-[4px] border-x-transparent border-t-[5px] border-t-[#111]" />
const Chev = ({ className }) => (
  <svg viewBox="0 0 10 6" className={`w-[10px] h-[6px] shrink-0 ${className}`} fill="none" stroke="#666"><path d="M1 1l4 4 4-4" /></svg>
)

const Spin = ({ value, className }) => (
  <div className={`w-[69px] h-[22px] border border-[#555] bg-white flex shrink-0 ${className || ""}`}>
    <span className={`flex-1 pl-[2px] text-[13px] leading-[20px] text-[#222] ${MONO}`}>{value}</span>
    <div className="w-[15px] bg-[#dcdcdc] border-l border-[#888] flex flex-col items-center justify-around">
      <span className="w-0 h-0 border-x-[4px] border-x-transparent border-b-[5px] border-b-black" />
      <span className="w-0 h-0 border-x-[4px] border-x-transparent border-t-[5px] border-t-black" />
    </div>
  </div>
)

const Align = ({ d, color }) => (
  <svg viewBox="0 0 16 14" className="w-[16px] h-[14px]" fill="none" stroke={color || "#3a78b8"}><path d={d} /></svg>
)

const TextFormat = () => (
  <div className={`absolute left-[656px] top-[262px] w-[797px] h-[111px] bg-[#efefef] border border-[#c8c8c8] border-b-[4px] border-b-[#8a8a8a] border-r-[3px] border-r-[#a0a0a0] pt-[6px] px-[8px] ${CJK}`}>
    <div className="h-[29px] bg-[#97b3d2] border-t border-[#e4ecf5] flex items-center pl-[2px] text-[14px] text-[#1f2a38] leading-none">文字格式</div>
    {/* first row */}
    <div className={`h-[24px] mt-[1px] flex items-center text-[13px] text-[#222] leading-none ${MONO}`}>
      <div className="ml-[5px] w-[104px] h-[22px] bg-[#dcdcdc] border border-[#aaa] rounded-[2px] flex items-center pl-[21px] shrink-0">Standard<Chev className="ml-[1px]" /></div>
      <div className="ml-[6px] w-[144px] h-[22px] bg-[#dcdcdc] border border-[#aaa] rounded-[2px] flex items-center pl-[5px] shrink-0">
        <span className="relative w-[13px] font-bold text-[14px] text-[#333]">T<span className="absolute left-[-3px] top-[-2px] text-[9px] font-normal text-[#777]">T</span></span><span className="ml-[2px]">Arial</span><Chev className="ml-auto mr-[6px]" />
      </div>
      <Fx className="ml-[2px] w-[18px] text-[#3a78b8] text-[15px] font-bold">A</Fx>
      <div className="ml-[9px] w-[59px] h-[22px] bg-white border border-[#aaa] flex items-center pl-[3px] shrink-0">80<Chev className="ml-auto mr-[6px]" /></div>
      <div className={`ml-[1px] flex text-[#333] ${ARIAL}`}>
        <Fx className="w-[24px] text-[18px] font-bold font-['Liberation_Serif']">B</Fx>
        <Fx className="w-[24px] text-[18px] italic font-['Liberation_Serif'] text-[#666]">I</Fx>
        <Fx className="w-[24px] text-[16px] line-through text-[#555]">A</Fx>
        <Fx className="w-[24px] text-[16px] underline decoration-[#3a78b8]">U</Fx>
        <Fx className="w-[24px] text-[16px] overline">O</Fx>
        <Fx className="w-[24px] text-[13px] text-[#2244aa]">↶</Fx>
        <Fx className="w-[24px] text-[13px] text-[#888]">↷</Fx>
        <Fx className="w-[24px] text-[9px]"><span className="text-center leading-[8px] font-bold">b<br />a</span></Fx>
      </div>
      <VSep className="ml-[2px]" />
      <div className="ml-[2px] w-[106px] h-[22px] bg-[#dcdcdc] border border-[#aaa] rounded-[2px] flex items-center pl-[4px] shrink-0">
        <span className="w-[11px] h-[13px] border border-[#333] bg-white mr-[2px]" />ByLayer<Chev className="ml-auto mr-[6px]" />
      </div>
      <VSep className="ml-[3px]" />
      <Fx className="ml-[3px] w-[30px]"><span className="w-[16px] h-[7px] bg-[#d8b878] border border-[#8a7440]" /></Fx>
      <VSep />
      <Fx className={`w-[61px] text-[14px] ${CJK}`}>确定</Fx>
      <VSep />
      <Fx className="w-[30px]"><span className="w-[13px] h-[13px] rounded-full border border-[#2d5f8a] bg-[#dfeaf3] flex items-center justify-center"><Chev className="w-[7px] h-[5px]" /></span></Fx>
    </div>
    <div className="h-px bg-[#b8b8b8] mt-[4px] mx-[1px]" />
    {/* second row */}
    <div className="h-[24px] mt-[6px] flex items-center text-[#333]">
      <Fx className="relative ml-[3px] w-[18px]">
        <Align color="#333" d="M1 2h14M1 5h14M1 8h14M1 11h14" />
        <svg viewBox="0 0 8 14" className="absolute left-[6px] top-[2px] w-[6px] h-[12px]" fill="#e8c020"><path d="M5 0L1 8h3l-1 6 4-8H4z" /></svg>
      </Fx>
      <Fx className="w-[12px]"><Tri /></Fx>
      <VSep className="ml-[7px]" />
      <Fx className="ml-[8px] w-[18px]"><Ico name="aBox" /></Fx>
      <Fx className="w-[12px]"><Tri /></Fx>
      <VSep className="ml-[7px]" />
      <Fx className="ml-[9px] w-[18px]"><Align color="#333" d="M2 1h12M6 4h8M6 7h8M2 10h12M2 13h12" /></Fx>
      <VSep className="ml-[5px]" />
      <Fx className="ml-[6px] w-[24px]"><Align d="M1 1h14M1 4h10M1 7h14M1 10h10M1 13h14" /></Fx>
      <Fx className="w-[24px]"><Align color="#555" d="M1 1h14M3 4h10M1 7h14M3 10h10M1 13h14" /></Fx>
      <Fx className="w-[24px]"><Align color="#555" d="M1 1h14M5 4h10M1 7h14M5 10h10M1 13h14" /></Fx>
      <Fx className="w-[24px]"><Align d="M1 1h14M1 4h14M1 7h14M1 10h14M1 13h14" /></Fx>
      <Fx className="w-[24px]"><Align color="#555" d="M1 1h14M1 4h2M6 4h4M13 4h2M1 8h14M1 11h14" /></Fx>
      <VSep className="ml-[3px]" />
      <Fx className="ml-[10px] w-[18px]"><Align color="#333" d="M2 1v12M5 2h10M5 7h10M5 12h10" /></Fx>
      <Fx className="w-[12px]"><Tri /></Fx>
      <VSep className="ml-[7px]" />
      <Fx className="ml-[9px] w-[18px]"><Align color="#555" d="M1 2h2M1 7h2M1 12h2M5 2h10M5 7h10M5 12h10" /></Fx>
      <Fx className="w-[12px]"><Tri /></Fx>
      <VSep className="ml-[6px]" />
      <Fx className="ml-[10px] w-[18px]"><Align color="#333" d="M1 1h6v12H1zM9 1h6v12H9z" /></Fx>
      <VSep className="ml-[5px]" />
      <Fx className={`ml-[10px] w-[18px] text-[12px] text-[#666] ${ARIAL}`}>ᴬA</Fx>
      <Fx className={`ml-[6px] w-[18px] text-[12px] text-[#777] ${ARIAL}`}>Aₐ</Fx>
      <VSep className="ml-[5px]" />
      <div className={`ml-[7px] w-[37px] h-[24px] bg-[#bcdcf2] border border-[#9cc4e0] flex items-center justify-center gap-[2px] text-[15px] italic font-bold ${ARIAL}`}>@<Tri /></div>
      <VSep className="ml-[3px]" />
      <Fx className={`w-[25px] text-[15px] italic text-[#555] ${ARIAL}`}>0/</Fx>
      <Spin value="0.0000" />
      <VSep className="ml-[1px]" />
      <Fx className={`w-[28px] text-[10px] font-bold text-[#444] ${ARIAL}`}>a·b</Fx>
      <Spin value="1.0000" />
      <VSep className="ml-[1px]" />
      <Fx className={`w-[27px] text-[17px] font-bold text-[#333] ${ARIAL}`}>o</Fx>
      <Spin value="1.0000" className="w-[70px]" />
    </div>
  </div>
)

const CanvasText = () => (
  <div className={`${ARIAL} text-white`}>
    <div className="absolute left-[543px] top-[403px] text-[28px] leading-[36px]">m</div>
    <div className="absolute left-[567px] top-[402px] text-[18px] leading-[18px]">3</div>
    <div className="absolute left-[791px] top-[430px] text-[20px] leading-none">1</div>
    <svg viewBox="0 0 20 26" className="absolute left-[792px] top-[433px] w-[20px] h-[26px]" stroke="#fff" fill="none"><path d="M18 0L1 25" /></svg>
    <div className="absolute left-[802px] top-[444px] text-[20px] leading-none">2</div>
    <div className="absolute left-[993px] top-[437px] w-[116px] h-[40px] border border-[#8a8a8a]">
      <div className="absolute left-0 right-0 top-[24px] border-t border-dashed border-[#888]" />
    </div>
    <div className="absolute left-[995px] top-[432px] text-[30px] leading-[36px]">±12</div>
    <div className="absolute left-[1039px] top-[440px] w-[7px] h-[27px] border-y border-[#ddd]">
      <div className="mx-auto w-px h-full bg-[#ddd]" />
    </div>
    <div className="absolute left-[940px] top-[568px] text-[30px] leading-[36px]">45°</div>
  </div>
)

const Watermark = () => (
  <div className="absolute left-[1636px] top-[985px] w-[262px] h-[86px] pointer-events-none">
    <svg viewBox="0 0 72 86" className="absolute left-0 top-0 w-[70px] h-[86px] opacity-75">
      <path d="M36 1l34 20v44L36 85 2 65V21z" fill="#1c7c98" />
      <path d="M36 1l34 20-16 9-18-10-18 10L2 21z" fill="#7fb4bc" />
      <path d="M36 20l18 10v24L36 65 18 54V30z" fill="#232f0c" />
      <path d="M36 26l14 8-14 8-14-8z" fill="#4e8f9e" />
      <path d="M22 37l13 8v16l-13-8zM37 45l13-8v16l-13 8z" fill="#2f7f93" />
    </svg>
    <div className="absolute left-[82px] top-[12px] text-[42px] leading-[42px] font-bold text-[#a9b0a4]/75 whitespace-nowrap font-['Liberation_Sans','Noto_Sans_CJK_SC',sans-serif]">3D世界网</div>
    <div className={`absolute left-[82px] top-[55px] text-[15px] leading-none tracking-[3.3px] text-[#8f9a8a]/70 whitespace-nowrap ${ARIAL}`}>WWW.3DSJW.COM</div>
  </div>
)

const AppIcon = ({ className, children, active }) => (
  <div className={`flex flex-col items-center h-[38px] shrink-0 ${active ? "bg-[#4a5538]" : ""} ${className}`}>
    <div className="h-[35px] pt-[3px] flex items-center justify-center">{children}</div>
    <div className="w-full h-[3px] bg-[#d8f0a8]" />
  </div>
)

const Taskbar = () => (
  <div className={`h-[77px] shrink-0 bg-[#242e0b] flex text-white ${CJK}`}>
    <div className="w-[44px] h-full flex items-center justify-center"><FaWindows className="w-[22px] h-[22px] mt-[1px]" /></div>
    <div className="w-[46px] h-full flex items-center justify-center">
      <span className="w-[19px] h-[21px] rounded-full border-[3px] border-[#eef3e0]" />
    </div>
    <div className="w-[44px] h-full flex items-center justify-center">
      <svg viewBox="0 0 20 20" className="w-[20px] h-[20px]" fill="none" stroke="#eee"><path d="M1 1h12M1 6v-1h12v8H1v-1M1 18h12M16 1v5M16 9v1M16 13v6" /></svg>
    </div>
    <AppIcon className="ml-[10px] w-[36px]">
      <svg viewBox="0 0 24 28" className="w-[22px] h-[27px]" fill="none" strokeWidth="2">
        <rect x="1" y="1" width="22" height="26" rx="3" fill="#fff" stroke="none" />
        <circle cx="12" cy="9" r="4" stroke="#5cb2e8" /><circle cx="8" cy="16" r="4" stroke="#3f7fe0" /><circle cx="16" cy="16" r="4" stroke="#e86a9a" />
      </svg>
    </AppIcon>
    <AppIcon className="ml-[10px] w-[35px]"><FaEdge className="w-[22px] h-[24px] text-[#0f79c4]" /></AppIcon>
    <AppIcon className="ml-[11px] w-[35px]">
      <svg viewBox="0 0 26 26" className="w-[26px] h-[26px]">
        <ellipse cx="10" cy="11" rx="9" ry="8" fill="#3fb52e" /><ellipse cx="18" cy="17" rx="7" ry="6" fill="#eef5e8" />
        <circle cx="7" cy="9" r="1.2" fill="#1f3a10" /><circle cx="12" cy="9" r="1.2" fill="#1f3a10" />
      </svg>
    </AppIcon>
    <AppIcon className="ml-[6px] w-[45px]" active>
      <svg viewBox="0 0 22 32" className="w-[22px] h-[32px]">
        <rect width="22" height="32" fill="#d62b2e" />
        <path d="M11 6L3 26h4l4-9 4 9h4z" fill="#3a0b0b" />
      </svg>
    </AppIcon>
    <AppIcon className="ml-[6px] w-[35px]">
      <svg viewBox="0 0 22 28" className="w-[20px] h-[27px]">
        <path d="M11 1l10 6v14l-10 6L1 21V7z" fill="#2d74d6" />
        <path d="M5 10l3 8 3-6 3 6 3-8" fill="none" stroke="#fff" strokeWidth="2" />
      </svg>
    </AppIcon>
    <div className="relative z-10 ml-auto flex items-center h-full">
      <svg viewBox="0 0 22 22" className="w-[20px] h-[20px]" fill="none" stroke="#f4f4f4" strokeWidth="1.5"><circle cx="14" cy="6" r="3.5" /><path d="M9 14c1-3 8-3 11 1" /><circle cx="7" cy="11" r="3" /><path d="M1 20c0-4 10-5 11 1" /></svg>
      <svg viewBox="0 0 18 10" className="ml-[18px] w-[17px] h-[9px]" fill="none" stroke="#f4f4f4" strokeWidth="1.3"><path d="M1 9l8-8 8 8" /></svg>
      <div className="ml-[4px] w-[64px] h-full grid grid-cols-2">
        <div className="flex items-center justify-center pb-[3px]">
          <svg viewBox="0 0 24 16" className="w-[20px] h-[13px]" fill="#e8f2f4"><path d="M6 15a5 5 0 0 1 0-10 6 6 0 0 1 11 1 4.5 4.5 0 0 1 1 9z" /></svg>
        </div>
        <div className="flex items-center justify-center pb-[3px]">
          <svg viewBox="0 0 22 14" className="w-[22px] h-[14px]" fill="none" stroke="#dfeef4"><path d="M7 1h14v12H7z" /><path d="M8 2h12v10H8z" fill="#8fc8e0" stroke="none" /><path d="M1 7h6" /></svg>
        </div>
        <div className="flex items-center justify-center">
          <svg viewBox="0 0 22 18" className="w-[21px] h-[17px]" fill="none" stroke="#eee" strokeWidth="1.2"><path d="M1 6h3l5-4v14l-5-4H1zM12 6a4 4 0 0 1 0 6M15 4a7 7 0 0 1 0 10M18 2a10 10 0 0 1 0 14" /></svg>
        </div>
        <div className="flex items-center justify-center">
          <svg viewBox="0 0 18 16" className="w-[18px] h-[16px]" fill="none" stroke="#9fd4e4" strokeWidth="1.3"><path d="M1 15A14 14 0 0 1 15 1M5 15A10 10 0 0 1 15 5M9 15a6 6 0 0 1 6-6" /><circle cx="14" cy="14" r="1.2" fill="#fff" stroke="none" /></svg>
        </div>
      </div>
      <svg viewBox="0 0 22 22" className="ml-[7px] w-[22px] h-[22px]" fill="none" stroke="#eee"><path d="M8 15L15 2l4 2-7 13-4 3zM6 8a6 6 0 1 0 2 12" /></svg>
      <span className="ml-[7px] w-[34px] text-[18px] text-center leading-none">英</span>
      <div className="w-[88px] flex flex-col items-center text-[15px] leading-none gap-[9px] text-white/90">
        <span>13:37</span>
        <span>星期四</span>
        <span>2019/3/28</span>
      </div>
      <div className="ml-[17px] mr-[32px] w-[19px] h-[17px] bg-[#f6f6f6] flex flex-col justify-center gap-[3px] px-[3px]">
        <span className="h-px bg-[#333]" /><span className="h-px bg-[#333]" /><span className="h-px bg-[#333]" />
      </div>
    </div>
  </div>
)

export default function App() {
  return (
    <div className="relative w-[1920px] h-[1080px] overflow-hidden flex flex-col bg-black">
      <div className="relative h-[1003px] shrink-0 pt-[3px] pl-[11px] bg-[linear-gradient(180deg,#c6d200_0%,#dcd63a_20%,#e8da68_50%,#d8d860_72%,#a6cf24_90%,#84cb1c_100%)]">
        <div className="absolute left-[3px] top-[436px] text-[#333] font-bold text-[15px] font-['Liberation_Serif',serif]">A</div>
        <div className="absolute left-[4px] top-[680px] text-[#333] font-bold text-[16px] font-['Liberation_Serif',serif]">S</div>
        <div className="w-[1897px] h-[992px] flex flex-col">
          <TitleBar />
          <Toolbars />
          <div className="h-[758px] shrink-0 flex">
            <LeftDock />
            <div className="flex-1 min-w-0 flex flex-col bg-[#6a6a6a]">
              <div className="flex-1 min-h-0 flex flex-col border-l-2 border-[#a8a8a8]">
                <Canvas />
                <Tabs />
                <AnnoStrip />
                <div className="h-[2px] shrink-0 bg-white" />
              </div>
              <div className="h-[4px] shrink-0" />
            </div>
            <RightDock />
          </div>
          <CommandLine />
          <StatusBar />
        </div>
      </div>
      <Taskbar />
      <CanvasText />
      <TextFormat />
      <SymbolMenu />
      <Watermark />
    </div>
  )
}
